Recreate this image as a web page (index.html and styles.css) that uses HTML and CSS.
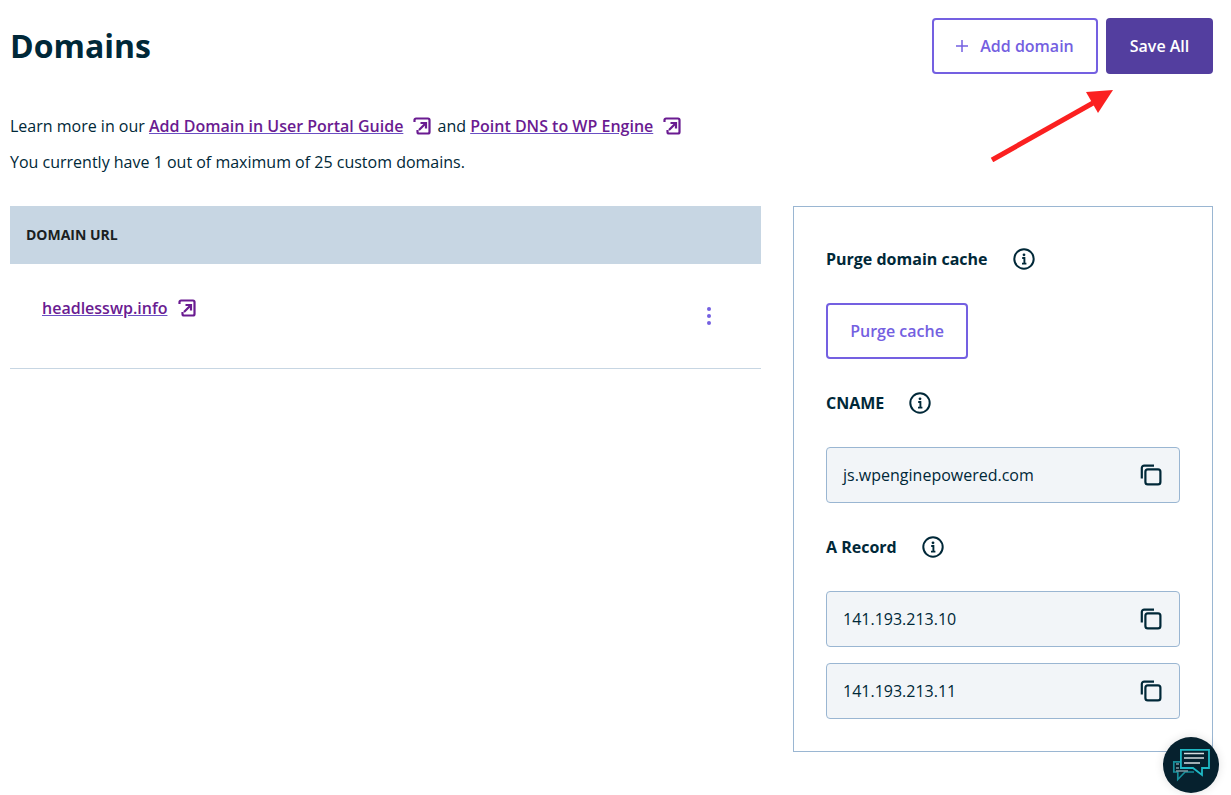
FILE: index.html
```html
<!DOCTYPE html>
<html lang="en">
<head>
<meta charset="utf-8">
<title>Domains</title>
<link rel="stylesheet" href="styles.css">
</head>
<body>
<svg width="0" height="0" class="defs">
  <symbol id="ext" viewBox="0 0 18 18">
    <path d="M1.5 5V3a1.5 1.5 0 0 1 1.5-1.5h12a1.5 1.5 0 0 1 1.5 1.5v12a1.5 1.5 0 0 1-1.5 1.5H6a1.5 1.5 0 0 1-1.5-1.5v-2" fill="none" stroke="currentColor" stroke-width="2.2"/>
    <path d="M6 13l6.5-6.5M7.5 6h5.5v5.5" fill="none" stroke="currentColor" stroke-width="2.2"/>
  </symbol>
  <symbol id="info" viewBox="0 0 22 22">
    <circle cx="11" cy="11" r="9.7" fill="none" stroke="currentColor" stroke-width="2"/>
    <circle cx="11" cy="6.8" r="1.4" fill="currentColor"/>
    <path d="M9.2 10h2.2v5.6M9 15.6h4.4" fill="none" stroke="currentColor" stroke-width="1.9"/>
  </symbol>
  <symbol id="copy" viewBox="0 0 22 22">
    <path d="M1.8 14.5V4a2.4 2.4 0 0 1 2.4-2.4H14" fill="none" stroke="currentColor" stroke-width="2.2"/>
    <rect x="5.4" y="5.4" width="15" height="15" rx="2.4" fill="none" stroke="currentColor" stroke-width="2.2"/>
  </symbol>
</svg>

<main class="page">
  <header class="top">
    <h1 class="title">Domains</h1>
    <div class="actions">
      <button class="btn btn-outline btn-add"><svg class="plus" viewBox="0 0 12 12"><path d="M6 0v12M0 6h12" fill="none" stroke="currentColor" stroke-width="1.5"/></svg>Add domain</button>
      <button class="btn btn-solid">Save All</button>
    </div>
  </header>

  <section class="intro">
    <p class="line">Learn more in our <a class="link" href="#">Add Domain in User Portal Guide</a><svg class="ext ext-a"><use href="#ext"/></svg> and <a class="link" href="#">Point DNS to WP Engine</a><svg class="ext ext-a"><use href="#ext"/></svg></p>
    <p class="line">You currently have 1 out of maximum of 25 custom domains.</p>
  </section>

  <div class="columns">
    <section class="table">
      <div class="thead">DOMAIN URL</div>
      <div class="row">
        <span class="row-main"><a class="link" href="#">headlesswp.info</a><svg class="ext ext-b"><use href="#ext"/></svg></span>
        <span class="kebab"><i></i><i></i><i></i></span>
      </div>
    </section>

    <aside class="panel">
      <div class="label">Purge domain cache<svg class="info info-a"><use href="#info"/></svg></div>
      <button class="btn btn-outline btn-purge">Purge cache</button>
      <div class="label">CNAME<svg class="info info-b"><use href="#info"/></svg></div>
      <div class="field"><span>js.wpenginepowered.com</span><svg class="copy"><use href="#copy"/></svg></div>
      <div class="label">A Record<svg class="info info-b"><use href="#info"/></svg></div>
      <div class="field"><span>141.193.213.10</span><svg class="copy"><use href="#copy"/></svg></div>
      <div class="field field-next"><span>141.193.213.11</span><svg class="copy"><use href="#copy"/></svg></div>
    </aside>
  </div>
</main>

<svg class="arrow" viewBox="0 0 130 72" width="130" height="72">
  <path d="M3 70L104 13" fill="none" stroke="#fb2020" stroke-width="5"/>
  <path d="M97 2L124 0L109 23Z" fill="#fb2020"/>
</svg>

<div class="chat">
  <svg viewBox="0 0 56 56" width="56" height="56">
    <path d="M17 24.8H10.8V35H14.8V42.5L22 35H31" fill="none" stroke="#17909c" stroke-width="1.7"/>
    <path d="M13 27h3M13 31h3M13 34h12" stroke="#7d99a2" stroke-width="1.5"/>
    <path d="M17.9 12.9H46V31H39V38L30 31H17.9Z" fill="#06212e" stroke="#1fb8c4" stroke-width="1.8"/>
    <path d="M21 16.5h20M21 21h20M21 26h16" stroke="#d5dde0" stroke-width="1.6"/>
  </svg>
</div>
</body>
</html>
```

FILE: styles.css
```css
* { box-sizing: border-box; }
html, body { margin: 0; padding: 0; }
body {
  width: 1231px;
  height: 795px;
  overflow: hidden;
  position: relative;
  background: #fff;
  color: #002838;
  font-family: "Open Sans", "Liberation Sans", sans-serif;
  font-size: 16px;
  line-height: 24px;
}
.defs { position: absolute; }
.page { padding: 18px 18px 0 10px; }
.top { display: flex; justify-content: space-between; align-items: center; height: 56px; }
.title { margin: 0; font-family: "Open Sans", sans-serif; font-size: 32px; line-height: 40px; font-weight: 700; color: #002838; }
.actions { display: flex; gap: 8px; }
.btn {
  height: 56px;
  border-radius: 4px;
  font-family: "Open Sans", sans-serif;
  font-size: 16px;
  font-weight: 600;
  line-height: 24px;
  padding: 0;
  display: flex;
  align-items: center;
  justify-content: center;
}
.btn-outline { background: #fff; border: 2px solid #7460e1; color: #7460e1; }
.btn-solid { background: #533e9f; border: 0; color: #fff; width: 107px; }
.btn-add { width: 166px; }
.plus { width: 12px; height: 12px; margin-right: 12px; }
.btn-purge { width: 142px; margin: 32px 0; }
.intro { margin-top: 40px; }
.line { margin: 0 0 12px; height: 24px; white-space: nowrap; }
.link { color: #6a1b91; font-weight: 600; text-decoration: underline; text-decoration-color: #6a4fc4; }
.ext { width: 18px; height: 18px; vertical-align: -3px; color: #6a1b91; }
.ext-a { margin-left: 10px; margin-right: 2px; }
.ext-b { margin-left: 11px; }
.columns { display: flex; justify-content: space-between; align-items: flex-start; margin-top: 32px; }
.table { width: 751px; }
.thead {
  height: 58px;
  background: #c7d6e3;
  padding: 0 16px;
  display: flex;
  align-items: center;
  font-size: 14px;
  font-weight: 700;
  color: #1a1f22;
}
.row {
  height: 105px;
  border-bottom: 1px solid #c7d6e3;
  display: flex;
  justify-content: space-between;
  padding: 32px 50px 0 32px;
}
.kebab { display: flex; flex-direction: column; gap: 3px; padding-top: 11px; }
.kebab i { width: 4px; height: 4px; border-radius: 50%; background: #7460e1; display: block; }
.panel { width: 420px; height: 546px; border: 1px solid #9ab6d2; padding: 40px 32px 0; }
.label { font-weight: 700; height: 24px; display: flex; align-items: center; color: #002838; }
.info { width: 22px; height: 22px; color: #002838; }
.info-a { margin-left: 25px; }
.info-b { margin-left: 25px; }
.field {
  width: 354px;
  height: 56px;
  margin: 32px 0;
  padding: 0 16px;
  background: #f2f5f8;
  border: 1px solid #9ab6d2;
  border-radius: 4px;
  display: flex;
  align-items: center;
  justify-content: space-between;
}
.field + .field-next { margin-top: -16px; }
.copy { width: 22px; height: 22px; color: #002838; margin-right: 1px; }
.arrow { position: absolute; left: 989px; top: 90px; }
.chat {
  position: absolute;
  left: 1163px;
  top: 737px;
  width: 56px;
  height: 56px;
  border-radius: 50%;
  background: #06212e;
  box-shadow: 0 0 10px rgba(0,0,0,.12);
}
```
